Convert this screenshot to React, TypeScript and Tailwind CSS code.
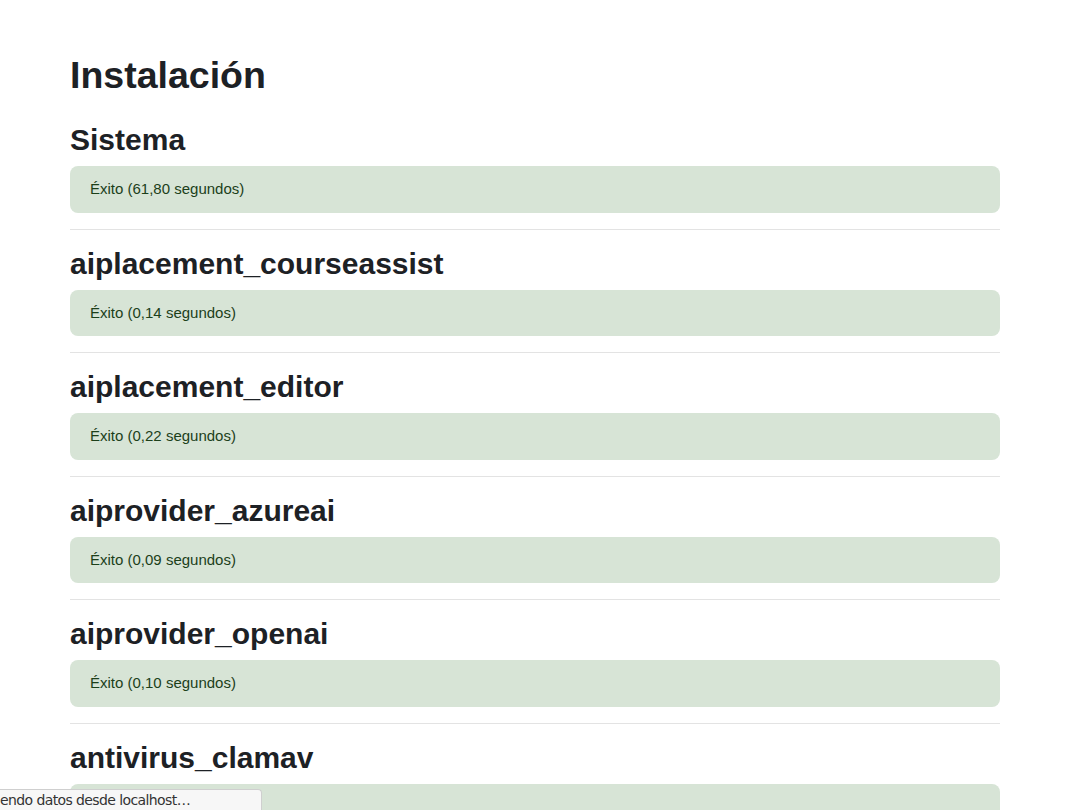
import React from "react";

const sections: { name: string; time: string }[] = [
  { name: "aiplacement_courseassist", time: "0,14" },
  { name: "aiplacement_editor", time: "0,22" },
  { name: "aiprovider_azureai", time: "0,09" },
  { name: "aiprovider_openai", time: "0,10" },
  { name: "antivirus_clamav", time: "0,08" },
];

function Alert({ time }: { time: string }) {
  return (
    <div className="mb-4 rounded-lg bg-[#d7e4d6] px-5 py-3 text-[15px] leading-[22.5px] text-[#1c3f1a]">
      Éxito ({time} segundos)
    </div>
  );
}

export default function App() {
  return (
    <div
      className="relative min-h-[810px] bg-white text-[#1d2125]"
      style={{ fontFamily: '"Liberation Sans", Arial, sans-serif' }}
    >
      <div className="mx-[70px] w-[930px] pt-[53px]">
        <h1 className="mb-6 text-[37.5px] font-bold leading-[45px]">Instalación</h1>
        <h2 className="mb-2 text-[30px] font-bold leading-[36px]">Sistema</h2>
        <Alert time="61,80" />
        {sections.map((s) => (
          <div key={s.name}>
            <hr className="mb-4 border-0 border-t border-[#e3e3e3]" />
            <h2 className="mb-2 text-[30px] font-bold leading-[36px]">{s.name}</h2>
            <Alert time={s.time} />
          </div>
        ))}
      </div>
      <div
        className="fixed bottom-0 left-0 z-10 h-[21px] w-[262px] overflow-hidden rounded-tr-[4px] border-t border-r border-[#cfcfcf] bg-[#f7f7f7] text-[14px] leading-[21px] text-[#333]"
        style={{ fontFamily: '"DejaVu Sans", "Noto Sans", sans-serif', letterSpacing: "-0.6px" }}
      >
        <span className="whitespace-nowrap">endo datos desde localhost…</span>
      </div>
    </div>
  );
}
